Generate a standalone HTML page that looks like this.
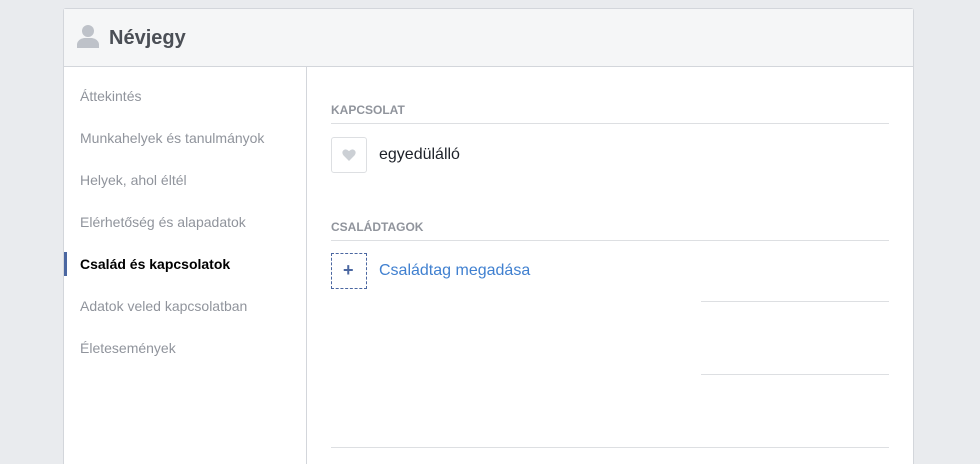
<!DOCTYPE html>
<html style="width:980px;height:464px;overflow:hidden"><head><meta charset="utf-8"><style>
*{margin:0;padding:0;box-sizing:border-box}
body{width:980px;height:464px;background:#e9ebee;font-family:"Liberation Sans",Arial,sans-serif;position:relative;overflow:hidden}
.card{position:absolute;left:63px;top:8px;width:851px;height:456px;background:#fff;border:1px solid #d3d6db;border-bottom:none;border-radius:3px 3px 0 0}
.hdr{position:absolute;left:0;top:0;width:849px;height:58px;background:#f5f6f7;border-bottom:1px solid #d3d6db}
.hdr .t{position:absolute;left:45px;top:18px;font-size:20px;font-weight:bold;color:#4b4f56}
.side{position:absolute;left:0;top:58px;width:243px;height:397px;border-right:1px solid #d3d6db}
.nav{position:absolute;left:16px;font-size:14px;color:#90949c}
.nav.a{color:#000;font-weight:bold}
.bar{position:absolute;left:0;top:185px;width:3px;height:24px;background:#4b67a1}
.abs{position:absolute}
.lbl{font-size:12px;font-weight:bold;color:#90949c}
.line{background:#dddfe2;height:1px}
</style></head><body>
<div class="card">
<div class="hdr">
<svg class="abs" style="left:13px;top:15px" width="22" height="24" viewBox="0 0 22 24"><circle cx="11" cy="7" r="6" fill="#bec2c9"/><path d="M0 24 L0 20 Q1 15 7 14 L15 14 Q21 15 22 20 L22 24Z" fill="#bec2c9"/></svg>
<div class="t">Névjegy</div>
</div>
<div class="side">
<div class="nav" style="top:21px">Áttekintés</div>
<div class="nav" style="top:63px">Munkahelyek és tanulmányok</div>
<div class="nav" style="top:105px">Helyek, ahol éltél</div>
<div class="nav" style="top:147px">Elérhetőség és alapadatok</div>
<div class="bar"></div>
<div class="nav a" style="top:189px">Család és kapcsolatok</div>
<div class="nav" style="top:231px">Adatok veled kapcsolatban</div>
<div class="nav" style="top:273px">Életesemények</div>
</div>
</div>
<div class="abs lbl" style="left:331px;top:103px">KAPCSOLAT</div>
<div class="abs line" style="left:331px;top:123px;width:558px"></div>
<div class="abs" style="left:331px;top:137px;width:36px;height:36px;border:1px solid #dddfe2;border-radius:3px"></div>
<svg class="abs" style="left:342px;top:149px" width="14" height="12" viewBox="0 0 16 14"><path d="M8 14 L1.5 7.5 Q-1 4 1.5 1.5 Q4.5 -1 8 2.5 Q11.5 -1 14.5 1.5 Q17 4 14.5 7.5Z" fill="#ccd0d5"/></svg>
<div class="abs" style="left:379px;top:146px;font-size:16px;color:#1d2129">egyedülálló</div>
<div class="abs lbl" style="left:331px;top:220px">CSALÁDTAGOK</div>
<div class="abs line" style="left:331px;top:240px;width:558px"></div>
<div class="abs" style="left:331px;top:253px;width:36px;height:36px;border:1px dashed #4b67a1"></div>
<div class="abs" style="left:343px;top:260px;font-size:18px;color:#4b67a1;font-weight:bold">+</div>
<div class="abs" style="left:379px;top:262px;font-size:16px;color:#4080d0">Családtag megadása</div>
<div class="abs line" style="left:701px;top:301px;width:188px"></div>
<div class="abs line" style="left:701px;top:374px;width:188px"></div>
<div class="abs line" style="left:331px;top:447px;width:558px"></div>
</body></html>
